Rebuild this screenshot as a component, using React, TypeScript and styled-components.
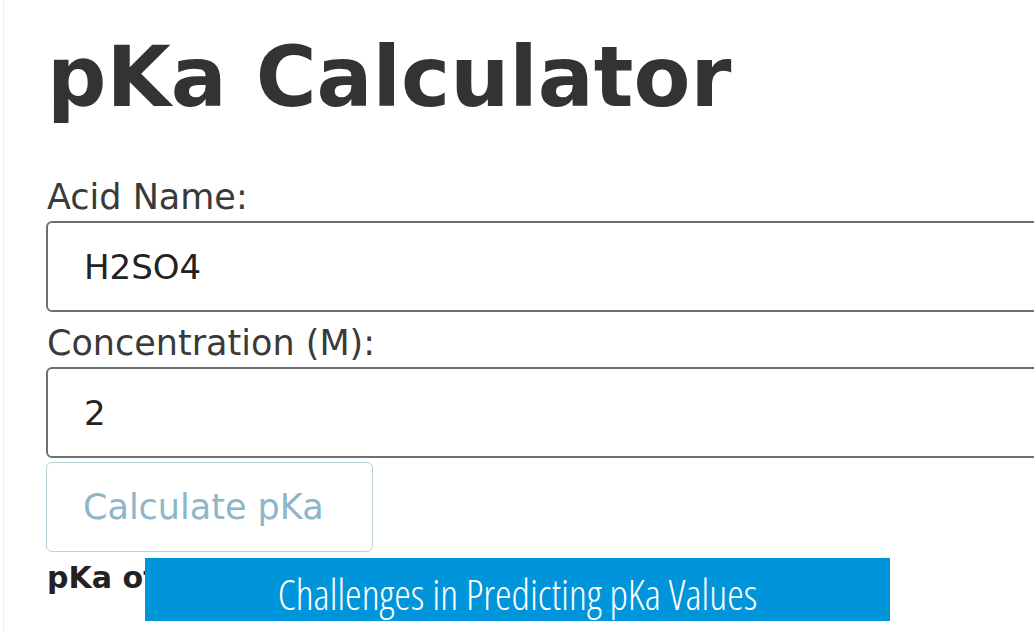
import React from "react";
import styled, { createGlobalStyle } from "styled-components";

const GlobalStyle = createGlobalStyle`
  html, body {
    margin: 0;
    padding: 0;
    background: #ffffff;
    overflow: hidden;
  }
  body {
    font-family: "DejaVu Sans", "Liberation Sans", sans-serif;
    color: #333333;
  }
`;

const Page = styled.main`
  position: relative;
  width: 1031px;
  height: 632px;
  margin-left: 3px;
  border-left: 1px solid #efefef;
  padding: 37px 0 0 43px;
  box-sizing: border-box;
  overflow: hidden;
`;

const Title = styled.h1`
  margin: 0 0 58px 0;
  font-size: 83px;
  line-height: 82px;
  font-weight: 700;
  color: #333333;
  white-space: nowrap;
`;

const Form = styled.form`
  display: flex;
  flex-direction: column;
  align-items: flex-start;
`;

const Label = styled.label<{ $gapBefore?: number }>`
  display: block;
  margin: ${(p) => p.$gapBefore ?? 0}px 0 4px 0;
  font-size: 35px;
  line-height: 40px;
  color: #3a3a3a;
  white-space: nowrap;
`;

const TextInput = styled.input`
  display: block;
  width: 1100px;
  height: 91px;
  box-sizing: border-box;
  margin: 0 0 0 -1px;
  padding: 0 0 0 36px;
  border: 2px solid #707070;
  border-radius: 6px;
  background: #ffffff;
  font-family: "DejaVu Sans", "Liberation Sans", sans-serif;
  font-size: 34px;
  color: #222222;
  outline: none;
`;

const CalcButton = styled.button`
  display: flex;
  align-items: center;
  width: 327px;
  height: 90px;
  box-sizing: border-box;
  margin: 4px 0 0 -1px;
  padding: 0 0 0 36px;
  border: 1.5px solid #b9cfd9;
  border-radius: 6px;
  background: #ffffff;
  font-family: "DejaVu Sans", "Liberation Sans", sans-serif;
  font-size: 35px;
  color: #8eb6ca;
  white-space: nowrap;
  cursor: pointer;
`;

const Result = styled.p`
  margin: 8px 0 0 0;
  font-size: 30px;
  line-height: 36px;
  font-weight: 700;
  color: #222222;
  white-space: nowrap;
`;

const Caption = styled.div`
  position: absolute;
  left: 141px;
  top: 558px;
  width: 745px;
  height: 63px;
  background: #0095da;
  display: flex;
  align-items: center;
  justify-content: center;
  overflow: hidden;
`;

const CaptionText = styled.span`
  font-family: "Open Sans", "Liberation Sans", sans-serif;
  font-weight: 300;
  font-size: 42px;
  font-stretch: 80%;
  color: #ffffff;
  white-space: nowrap;
  margin-top: 7px;
`;

export default function App() {
  return (
    <>
      <GlobalStyle />
      <Page>
        <Title>pKa Calculator</Title>
        <Form onSubmit={(e) => e.preventDefault()}>
          <Label htmlFor="acid">Acid Name:</Label>
          <TextInput id="acid" type="text" defaultValue="H2SO4" />
          <Label htmlFor="conc" $gapBefore={11}>
            Concentration (M):
          </Label>
          <TextInput id="conc" type="text" defaultValue="2" />
          <CalcButton type="submit">Calculate pKa</CalcButton>
          <Result>pKa of H2SO4: -3.00</Result>
        </Form>
        <Caption>
          <CaptionText>Challenges in Predicting pKa Values</CaptionText>
        </Caption>
      </Page>
    </>
  );
}
